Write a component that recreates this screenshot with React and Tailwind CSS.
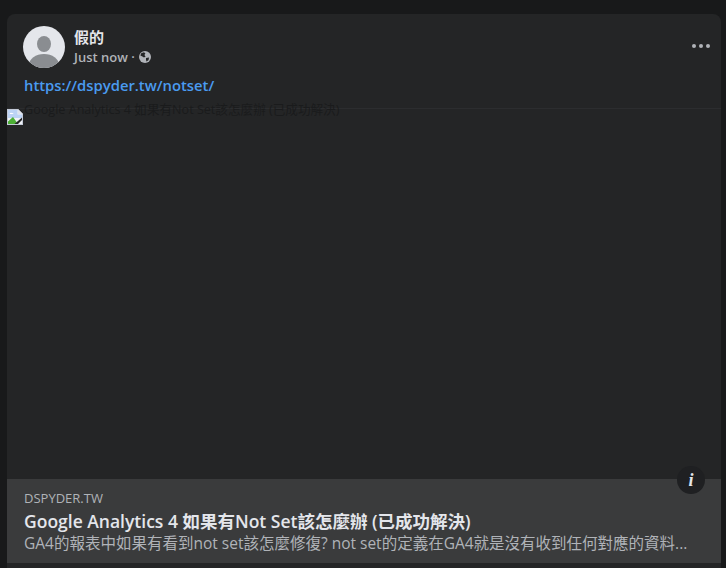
import React from 'react';

const sans = 'font-["Open_Sans","Noto_Sans_CJK_TC",sans-serif]';

function Avatar() {
  return (
    <svg viewBox="0 0 42 42" className="w-[42px] h-[42px] shrink-0">
      <defs>
        <clipPath id="avatar-clip">
          <circle cx="21" cy="21" r="21" />
        </clipPath>
      </defs>
      <g clipPath="url(#avatar-clip)">
        <rect width="42" height="42" fill="#e4e6eb" />
        <ellipse cx="21" cy="18" rx="7" ry="8" fill="#8a8d91" />
        <ellipse cx="21" cy="39" rx="15" ry="11" fill="#8a8d91" />
      </g>
    </svg>
  );
}

function Globe() {
  return (
    <svg viewBox="0 0 12 12" className="w-3 h-3">
      <circle cx="6" cy="6" r="6" fill="#b0b3b8" />
      <path d="M2.2 2.2 L5 1.2 L6.4 2.4 L5.4 4 L6.6 5.4 L5 6.6 L3.4 5.6 L1.4 4.4 Z" fill="#242526" />
      <path d="M7 7 L10 6.6 L9.6 9 L7.6 10.6 L7 9 Z" fill="#242526" />
    </svg>
  );
}

function BrokenImage() {
  return (
    <svg viewBox="0 0 16 16" className="w-4 h-4 shrink-0">
      <path d="M0 0 H11 L16 5 V16 H0 Z" fill="#c3c9d6" />
      <path d="M1 1 H10.5 L15 5.5 V15 H1 Z" fill="#eef1f6" />
      <path d="M1 1 H10.5 V5.5 H15 V9 H1 Z" fill="#bcd3f5" />
      <path d="M2.5 5 q1 -2 2.5 -1 q1.5 0 1.5 1 Z" fill="#ffffff" />
      <path d="M1 15 V12.5 L6 8 L11 15 Z" fill="#4caf35" />
      <path d="M7.5 15 L15 8.5 V11 L11 15 Z" fill="#242526" />
      <path d="M11 0 L16 5 H11 Z" fill="#dfe3eb" />
    </svg>
  );
}

export default function App() {
  return (
    <div className={`h-[568px] overflow-hidden bg-[#18191a] pt-[14px] pl-[7px] pr-[5px] ${sans}`}>
      <div className="h-full flex flex-col bg-[#242526] rounded-t-lg overflow-hidden">

        {/* Header */}
        <div className="flex items-start pl-4 pr-[11px] pt-3">
          <Avatar />
          <div className="ml-[9px] flex-1">
            <div className="mt-[1px] text-[15px] leading-[20px] font-semibold text-[#e4e6eb]">假的</div>
            <div className="mt-[2px] flex items-center gap-1 text-[13px] leading-[16px] font-semibold text-[#b0b3b8]">
              <span>Just now ·</span>
              <Globe />
            </div>
          </div>
          <div className="flex gap-[3px] mt-[18px]">
            <span className="w-1 h-1 rounded-full bg-[#b0b3b8]" />
            <span className="w-1 h-1 rounded-full bg-[#b0b3b8]" />
            <span className="w-1 h-1 rounded-full bg-[#b0b3b8]" />
          </div>
        </div>

        {/* Post text */}
        <div className="pl-[17px] pt-[7px] h-[40px] text-[14.8px] leading-[20px] font-semibold text-[#4a9bf0]">
          https://dspyder.tw/notset/
        </div>

        {/* Broken image */}
        <div className="relative flex-1 border-t border-[#2c2d2f]">
          <div className="absolute left-[17px] top-[-7px] text-[12.6px] leading-[15px] text-[#1a1b1c] whitespace-nowrap">
            Google Analytics 4 如果有Not Set該怎麼辦 (已成功解決)
          </div>
          <div className="relative">
            <BrokenImage />
          </div>
          <div className="absolute right-[16px] bottom-[-15px] w-7 h-7 rounded-full bg-[#1f2022] z-10 flex items-center justify-center">
            <span className="font-['Liberation_Serif',serif] italic font-bold text-[18px] leading-none text-[#e4e6eb]">i</span>
          </div>
        </div>

        {/* Link card */}
        <div className="bg-[#3a3b3c] h-[84px] mb-[5px] pl-[17px] pr-4 pt-[11px]">
          <div className="text-[13px] leading-4 text-[#b0b3b8]">DSPYDER.TW</div>
          <div className="mt-[4px] text-[17.5px] leading-[23px] font-semibold text-[#e4e6eb] whitespace-nowrap">
            Google Analytics 4 如果有Not Set該怎麼辦 (已成功解決)
          </div>
          <div className="text-[15.5px] leading-[20px] text-[#b0b3b8] whitespace-nowrap overflow-hidden text-ellipsis">
            GA4的報表中如果有看到not set該怎麼修復? not set的定義在GA4就是沒有收到任何對應的資料...
          </div>
        </div>
      </div>
    </div>
  );
}
